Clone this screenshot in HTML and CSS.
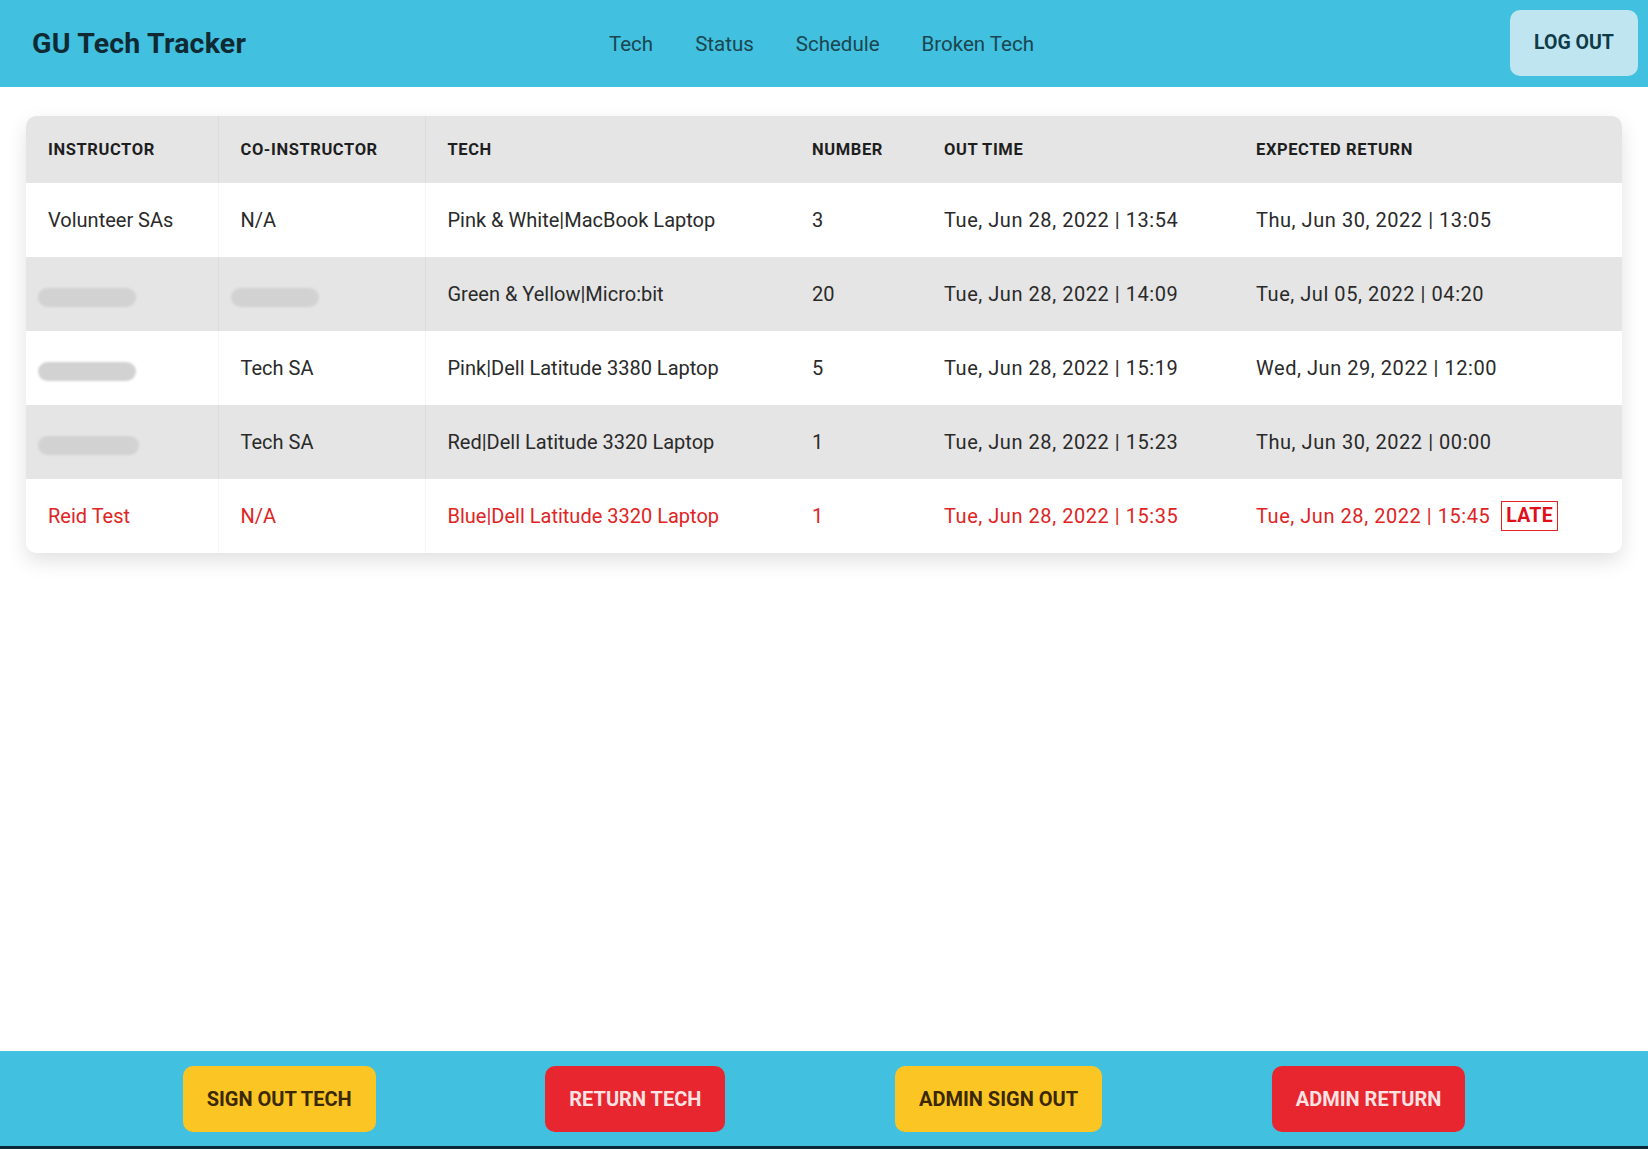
FILE: index.html
```html
<!DOCTYPE html>
<html lang="en">
<head>
<meta charset="utf-8">
<title>GU Tech Tracker</title>
<link rel="stylesheet" href="styles.css">
</head>
<body>
<div class="page">
  <header class="topbar">
    <div class="brand">GU Tech Tracker</div>
    <nav class="nav">
      <a class="nav-link">Tech</a>
      <a class="nav-link">Status</a>
      <a class="nav-link">Schedule</a>
      <a class="nav-link">Broken Tech</a>
    </nav>
    <button class="logout">LOG OUT</button>
  </header>

  <main class="main">
    <div class="card">
      <table class="tbl">
        <colgroup>
          <col class="c1"><col class="c2"><col class="c3"><col class="c4"><col class="c5"><col class="c6">
        </colgroup>
        <thead>
          <tr>
            <th class="sep">INSTRUCTOR</th>
            <th class="sep">CO-INSTRUCTOR</th>
            <th>TECH</th>
            <th>NUMBER</th>
            <th>OUT TIME</th>
            <th>EXPECTED RETURN</th>
          </tr>
        </thead>
        <tbody>
          <tr>
            <td class="sep">Volunteer SAs</td>
            <td class="sep">N/A</td>
            <td>Pink &amp; White|MacBook Laptop</td>
            <td>3</td>
            <td class="date">Tue, Jun 28, 2022 | 13:54</td>
            <td class="date">Thu, Jun 30, 2022 | 13:05</td>
          </tr>
          <tr class="alt">
            <td class="sep"><span class="redact w98"></span></td>
            <td class="sep"><span class="redact w88"></span></td>
            <td>Green &amp; Yellow|Micro:bit</td>
            <td>20</td>
            <td class="date">Tue, Jun 28, 2022 | 14:09</td>
            <td class="date">Tue, Jul 05, 2022 | 04:20</td>
          </tr>
          <tr>
            <td class="sep"><span class="redact w98"></span></td>
            <td class="sep">Tech SA</td>
            <td>Pink|Dell Latitude 3380 Laptop</td>
            <td>5</td>
            <td class="date">Tue, Jun 28, 2022 | 15:19</td>
            <td class="date">Wed, Jun 29, 2022 | 12:00</td>
          </tr>
          <tr class="alt">
            <td class="sep"><span class="redact w101"></span></td>
            <td class="sep">Tech SA</td>
            <td>Red|Dell Latitude 3320 Laptop</td>
            <td>1</td>
            <td class="date">Tue, Jun 28, 2022 | 15:23</td>
            <td class="date">Thu, Jun 30, 2022 | 00:00</td>
          </tr>
          <tr class="late">
            <td class="sep">Reid Test</td>
            <td class="sep">N/A</td>
            <td>Blue|Dell Latitude 3320 Laptop</td>
            <td>1</td>
            <td class="date">Tue, Jun 28, 2022 | 15:35</td>
            <td class="date">Tue, Jun 28, 2022 | 15:45<span class="badge">LATE</span></td>
          </tr>
        </tbody>
      </table>
    </div>
  </main>

  <footer class="actions">
    <button class="btn btn-yellow">SIGN OUT TECH</button>
    <button class="btn btn-red">RETURN TECH</button>
    <button class="btn btn-yellow">ADMIN SIGN OUT</button>
    <button class="btn btn-red">ADMIN RETURN</button>
  </footer>
</div>
</body>
</html>
```

FILE: styles.css
```css
* { box-sizing: border-box; }

html, body {
  margin: 0;
  padding: 0;
  height: 100%;
}

body {
  font-family: Roboto, "Liberation Sans", sans-serif;
  color: #222;
  background: #fff;
}

.page {
  display: flex;
  flex-direction: column;
  min-height: 100vh;
}

.topbar {
  height: 87px;
  background: #41c0df;
  display: flex;
  align-items: center;
  padding: 0 10px 0 32px;
}

.brand {
  font-size: 28.5px;
  font-weight: 700;
  color: #0f2a33;
  width: 577px;
  letter-spacing: 0.2px;
}

.nav {
  display: flex;
  gap: 42px;
  flex: 1;
}

.nav-link {
  font-size: 20.5px;
  color: #1b4650;
}

.logout {
  width: 128px;
  height: 66px;
  background: #bfe5f0;
  border: none;
  border-radius: 10px;
  font-family: inherit;
  font-size: 19.5px;
  font-weight: 700;
  color: #0f3a48;
  margin-top: -2px;
}

.main {
  flex: 1;
  padding: 29px 26px 0 26px;
}

.card {
  background: #fff;
  border-radius: 10px;
  overflow: hidden;
  box-shadow: 0 8px 20px rgba(0, 0, 0, 0.12);
}

.tbl {
  width: 100%;
  border-collapse: collapse;
  table-layout: fixed;
}

.c1 { width: 192px; }
.c2 { width: 207px; }
.c3 { width: 365px; }
.c4 { width: 132px; }
.c5 { width: 312px; }
.c6 { width: 388px; }

.tbl th {
  height: 67px;
  background: #e5e5e5;
  text-align: left;
  font-size: 16.5px;
  font-weight: 700;
  color: #1e1e1e;
  padding: 0 22px;
  letter-spacing: 0.6px;
}

.tbl td {
  height: 74px;
  padding: 0 22px;
  font-size: 20px;
  color: #2a2a2a;
  white-space: nowrap;
}

.tbl .sep {
  border-right: 1px solid rgba(0, 0, 0, 0.035);
}

.tbl tr.alt td {
  background: #e5e5e5;
}

.tbl tr.late td {
  color: #e02424;
}

.tbl td.date {
  letter-spacing: 0.55px;
}

.redact {
  display: inline-block;
  height: 19px;
  border-radius: 10px;
  background: #d2d2d2;
  filter: blur(0.8px);
  vertical-align: middle;
  margin-left: -10px;
  margin-top: 4px;
}

.w98 { width: 98px; }
.w88 { width: 88px; }
.w101 { width: 101px; }

.badge {
  display: inline-block;
  margin-left: 11px;
  border: 1.5px solid #e02424;
  color: #e0101a;
  font-weight: 700;
  font-size: 19.5px;
  letter-spacing: 0.2px;
  padding: 2px 4px;
  line-height: 24px;
  vertical-align: 1px;
}

.actions {
  height: 98px;
  background: #41c0df;
  border-bottom: 3px solid #0b2838;
  display: flex;
  justify-content: space-evenly;
  align-items: center;
  padding: 0 13px;
}

.btn {
  height: 66px;
  border: none;
  border-radius: 10px;
  font-family: inherit;
  font-size: 20px;
  font-weight: 700;
  padding: 0 24px;
}

.btn-yellow {
  background: #fbc523;
  color: #3a2800;
}

.btn-red {
  background: #e8262f;
  color: #ffe2e2;
}
```
